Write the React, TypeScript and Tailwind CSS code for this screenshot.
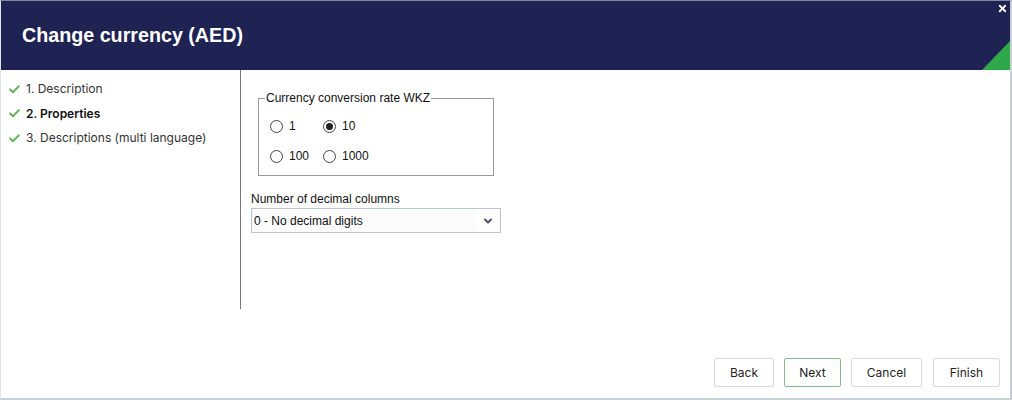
import { Check, ChevronDown, X } from "lucide-react"

const steps = [
  { label: "1. Description", active: false },
  { label: "2. Properties", active: true },
  { label: "3. Descriptions (multi language)", active: false },
]

const rates = [
  ["1", "10"],
  ["100", "1000"],
]

export default function App() {
  return (
    <div className="w-[1012px] h-[400px] bg-white flex flex-col border-t border-t-[#7d8aa3] border-l border-l-[#dfe4ec] border-r-2 border-r-[#c9ced8] border-b-2 border-b-[#c9cfdb] overflow-hidden font-['Liberation_Sans',Arial,sans-serif]">
      {/* Header */}
      <div className="relative h-[69px] shrink-0 bg-[#1f2353] flex items-center pl-[21px]">
        <h1 className="text-white font-bold text-[19.7px] leading-none">Change currency (AED)</h1>
        <X className="absolute top-[2px] right-[2px] w-[11px] h-[11px] text-white" strokeWidth={4} />
        <div className="absolute bottom-0 right-0 w-0 h-0 border-l-[28px] border-l-transparent border-b-[29px] border-b-[#2fa84a]" />
      </div>

      {/* Body */}
      <div className="flex flex-1 min-h-0">
        <div className="w-[240px] h-[239px] shrink-0 border-r border-r-[#7a7a7a] pt-[7px] font-['Inter',sans-serif] text-[12px] text-[#333]">
          {steps.map((s) => (
            <div key={s.label} className="flex items-center h-[24.5px] pl-[7px]">
              <Check className="w-[13px] h-[13px] shrink-0 text-[#5fb85a] mr-[5px]" strokeWidth={3.5} />
              <span className={s.active ? "font-semibold text-[#111]" : ""}>{s.label}</span>
            </div>
          ))}
        </div>

        <div className="flex-1 flex flex-col pl-[10px] pt-[21px] text-[12px] text-[#111]">
          <fieldset className="ml-[7px] w-[236px] h-[85px] border border-[#9a9a9a] pl-[11px] pt-[14px] pb-0 m-0">
            <legend className="px-[1px] ml-[-5px] leading-[14px]">Currency conversion rate WKZ</legend>
            <div className="flex flex-col gap-[16px]">
              {rates.map((row) => (
                <div key={row[0]} className="flex items-center h-[14px]">
                  {row.map((r, i) => (
                    <label key={r} className={`flex items-center ${i === 0 ? "w-[53px]" : ""}`}>
                      <span className="w-[13px] h-[13px] shrink-0 rounded-full border border-[#444] flex items-center justify-center mr-[6px]">
                        {r === "10" && <span className="w-[7px] h-[7px] rounded-full bg-[#222]" />}
                      </span>
                      {r}
                    </label>
                  ))}
                </div>
              ))}
            </div>
          </fieldset>

          <div className="mt-[16px] leading-[14px]">Number of decimal columns</div>
          <div className="mt-[2px] w-[250px] h-[25px] border border-[#b9c5d6] flex items-center bg-[#fbfbfc]">
            <span className="flex-1 pl-[2px]">0 - No decimal digits</span>
            <div className="w-[25px] h-full bg-white flex items-center justify-center">
              <ChevronDown className="w-[12px] h-[12px] text-[#4a5568]" strokeWidth={4} />
            </div>
          </div>
        </div>
      </div>

      {/* Footer */}
      <div className="h-[50px] shrink-0 flex items-start justify-end gap-[10px] pt-[10px] pr-[10px] font-['Inter',sans-serif] text-[12px] text-[#222]">
        <button className="w-[60px] h-[29px] border border-[#d6dbe5] rounded-[2px] bg-white">Back</button>
        <button className="w-[57px] h-[29px] border border-[#7fbf87] rounded-[2px] bg-white">Next</button>
        <button className="w-[71px] h-[29px] border border-[#d6dbe5] rounded-[2px] bg-white">Cancel</button>
        <button className="w-[67px] h-[29px] border border-[#d6dbe5] rounded-[2px] bg-white ml-[1px]">Finish</button>
      </div>
    </div>
  )
}
